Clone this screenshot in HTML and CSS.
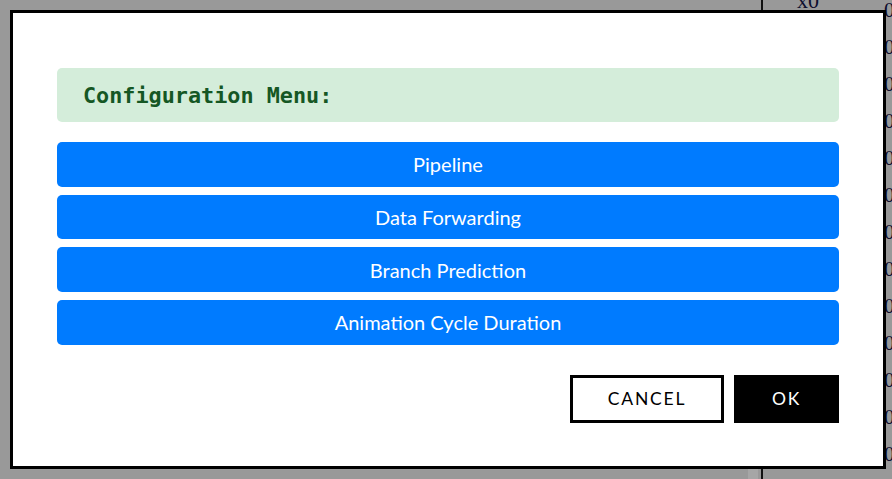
FILE: index.html
```html
<!DOCTYPE html>
<html>
<head>
<meta charset="utf-8">
<link rel="stylesheet" href="styles.css">
</head>
<body>
<div class="page">
  <div class="left-pane">
    <div class="scroll-thumb"></div>
  </div>
  <div class="divider"></div>
  <div class="right-pane">
    <div class="col-head">x0</div>
    <div class="col-values">
      <div class="cell">0</div><div class="cell">0</div><div class="cell">0</div>
      <div class="cell">0</div><div class="cell">0</div><div class="cell">0</div>
      <div class="cell">0</div><div class="cell">0</div><div class="cell">0</div>
      <div class="cell">0</div><div class="cell">0</div><div class="cell">0</div>
      <div class="cell">0</div>
    </div>
  </div>
</div>

<div class="modal">
  <div class="modal-header">Configuration Menu:</div>
  <div class="menu">
    <button class="menu-btn">Pipeline</button>
    <button class="menu-btn">Data Forwarding</button>
    <button class="menu-btn">Branch Prediction</button>
    <button class="menu-btn">Animation Cycle Duration</button>
  </div>
  <div class="actions">
    <button class="btn btn-cancel">CANCEL</button>
    <button class="btn btn-ok">OK</button>
  </div>
</div>
</body>
</html>
```

FILE: styles.css
```css
* { box-sizing: border-box; }
html, body {
  margin: 0;
  padding: 0;
  width: 892px;
  height: 479px;
  overflow: hidden;
  background: #999999;
}
.page {
  display: flex;
  height: 479px;
}
.left-pane {
  width: 761px;
  position: relative;
}
.scroll-thumb {
  position: absolute;
  left: 748px;
  bottom: 0;
  width: 10px;
  height: 14px;
  background: #a6a6a6;
}
.divider {
  width: 2px;
  background: #111;
}
.right-pane {
  flex: 1;
  position: relative;
  font-family: "Liberation Serif", serif;
  color: #0d0d2e;
}
.col-head {
  position: absolute;
  left: 34px;
  top: -12px;
  font-size: 22px;
}
.col-values {
  position: absolute;
  left: 121px;
  top: -2px;
  display: flex;
  flex-direction: column;
}
.cell {
  height: 37px;
  font-size: 21px;
  line-height: 24px;
}

.modal {
  position: fixed;
  left: 10px;
  top: 10px;
  width: 876px;
  height: 459px;
  background: #fff;
  border: 3px solid #000;
  padding: 55px 44px 0 44px;
}
.modal-header {
  height: 54px;
  background: #d4edda;
  color: #155724;
  border-radius: 5px;
  padding: 0 26px;
  display: flex;
  align-items: center;
  font-family: "DejaVu Sans Mono", monospace;
  font-weight: bold;
  font-size: 21.8px;
}
.menu {
  margin-top: 20px;
  display: flex;
  flex-direction: column;
  gap: 8px;
}
.menu-btn {
  height: 44.67px;
  border: none;
  border-radius: 5px;
  background: #007bff;
  color: #fff;
  font-family: Lato, sans-serif;
  font-size: 20px;
  padding: 0;
}
.actions {
  margin-top: 30px;
  display: flex;
  justify-content: flex-end;
  gap: 10px;
}
.btn {
  height: 48px;
  font-family: Lato, sans-serif;
  font-size: 17.5px;
  letter-spacing: 1.8px;
  padding: 0;
}
.btn-cancel {
  width: 154px;
  background: #fff;
  color: #000;
  border: 3px solid #000;
}
.btn-ok {
  width: 105px;
  background: #000;
  color: #fff;
  border: none;
}
```
